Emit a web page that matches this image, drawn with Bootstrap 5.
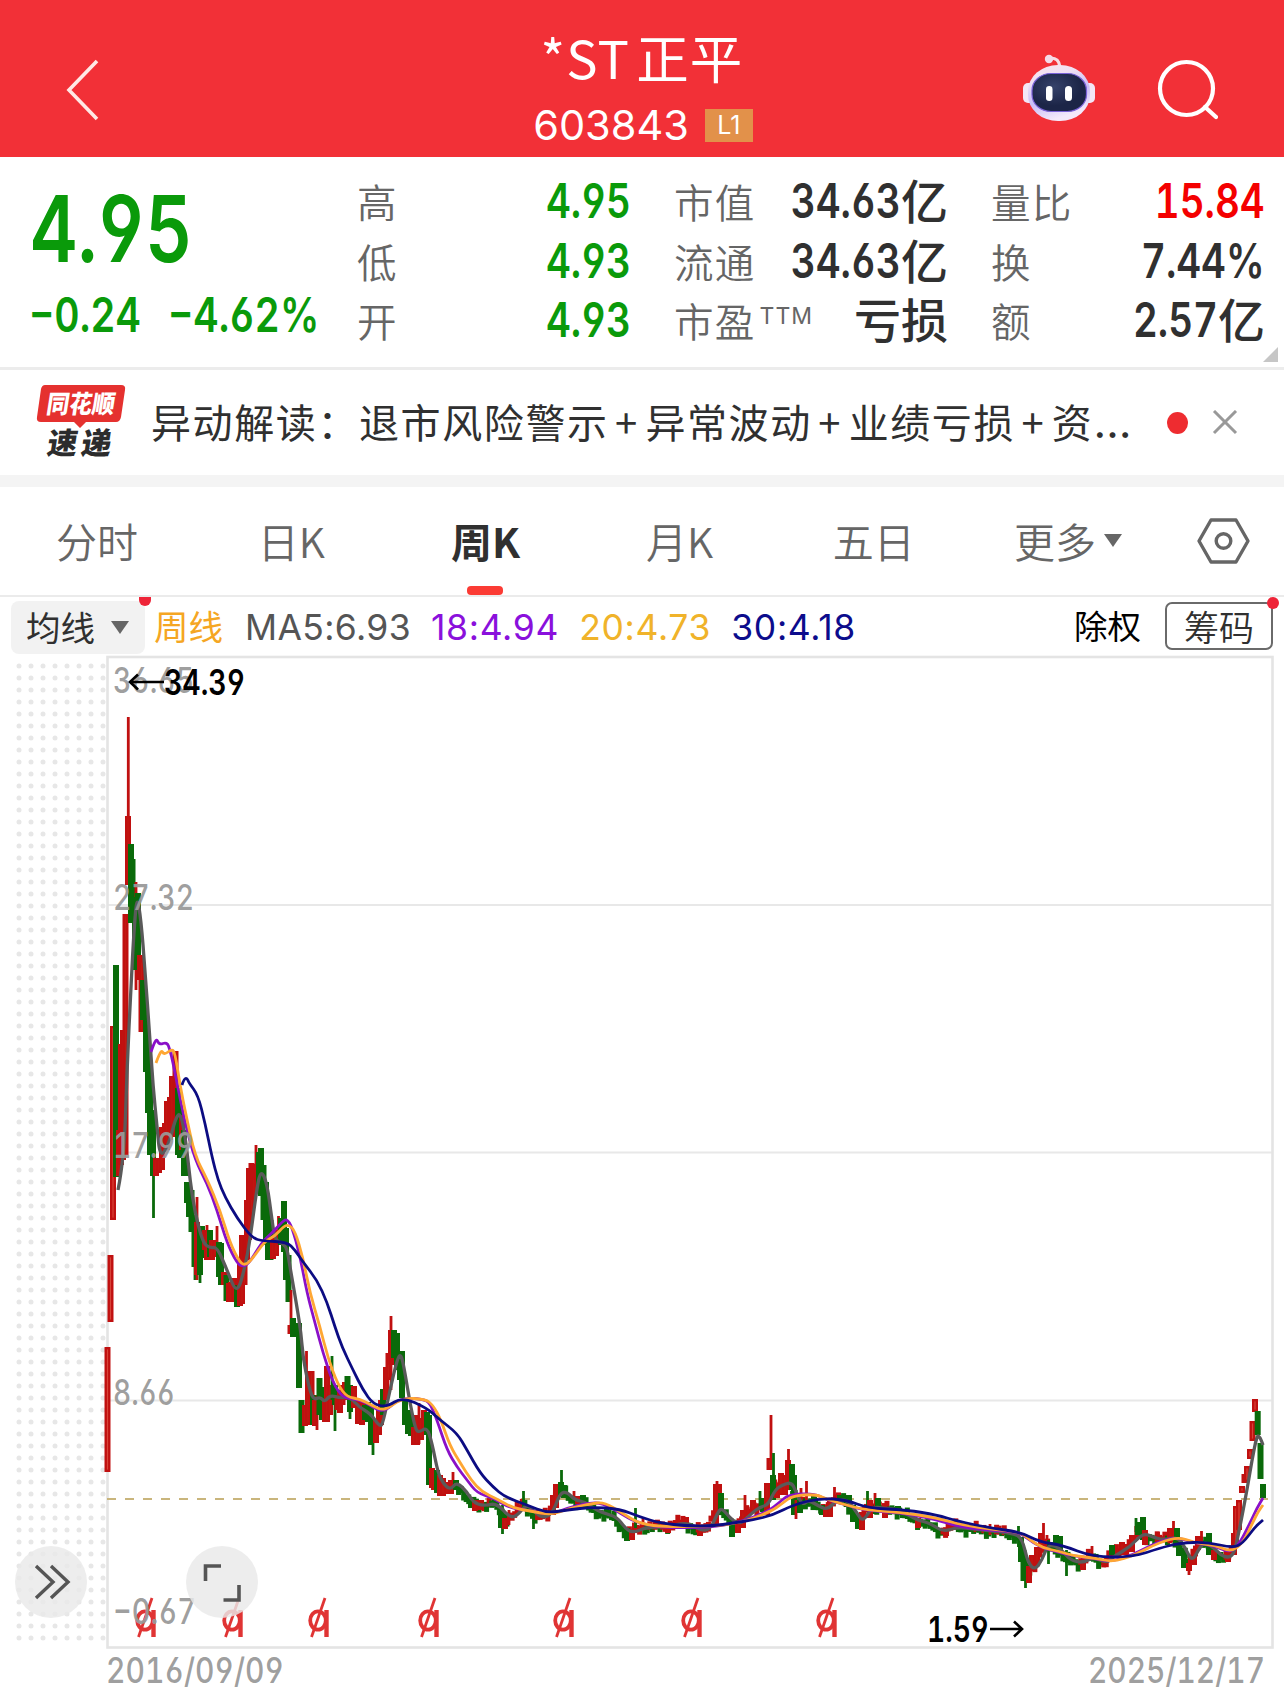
<!DOCTYPE html>
<html lang="zh-CN">
<head>
<meta charset="utf-8">
<meta name="viewport" content="width=device-width, initial-scale=1">
<title>*ST正平 603843</title>
<link href="https://cdn.jsdelivr.net/npm/bootstrap@5.3.0/dist/css/bootstrap.min.css" rel="stylesheet">
<style>
body{width:1284px;height:1692px;overflow:hidden;background:#fff;color:#303030;font-family:"Noto Sans CJK SC",sans-serif;line-height:1}
svg{display:block}
.topbar{height:157px;background:#f23037;color:#fff;padding:0 66px}
.side{width:330px}
.stock-name{font-size:52.5px;line-height:60px;margin-top:26px;letter-spacing:1.2px}
.stock-name span{margin-left:6px}
.stock-code{font-family:Inter,sans-serif;font-size:41.5px;line-height:44px;margin-top:17px;padding-left:2px}
.level{background:#e2914a;font-family:Inter,sans-serif;font-size:25px;width:48px;height:33px;margin-left:16px;line-height:33px;text-align:center}
.din{font-family:Inter,"Noto Sans CJK SC",sans-serif;font-weight:600;font-feature-settings:"cv03","cv04","tnum";display:inline-block;white-space:nowrap;transform:scaleX(.81);transform-origin:right center;font-size:47.5px;line-height:60px}
.din.lft{transform-origin:left center}
.chg-row .din{transform:scaleX(.825);margin-left:-1px}
.fall{color:#0a9a0a}
.rise{color:#f40000}
.quote{height:213px;border-bottom:3px solid #ececec;padding:14px 18px 0 30px}
.price-col{width:327px}
.price{font-size:92px;line-height:92px;margin-top:12px;transform:scaleX(.8)}
.chg-row{margin-top:10px}
.chg{width:139px}
.stat-col{width:274px;margin-right:43px}
.stat-col:last-of-type{margin-right:0}
.stat{height:59.7px}
.stat-label{font-size:39.5px;letter-spacing:1.3px;color:#666;font-weight:350;white-space:nowrap}
.ttm{font-family:Inter,sans-serif;font-size:23px;letter-spacing:1px;margin:0 0 8px 4px;color:#666}
.unit{font-size:47px;font-weight:500;line-height:60px;position:relative;top:-2px}
.corner{right:6px;bottom:5px;width:15px;height:15px;background:#c6c6c6;clip-path:polygon(100% 0,100% 100%,0 100%)}
.news{height:105px;padding-left:36px}
.news-text{font-size:40px;letter-spacing:1.6px;margin-left:24px;width:996px;white-space:nowrap;line-height:60px;padding-bottom:3px}
.news-text i{font-style:normal;margin:0 6.5px}
.news-text b{font-family:Inter,sans-serif;font-weight:400;letter-spacing:0;font-size:44px;line-height:40px}
.dot{width:21px;height:22px;background:#ee2c30;margin-left:20px}
.band{height:12px;background:#f4f4f4}
.tabs{height:110px;border-bottom:2px solid #ebebeb;font-size:41px;color:#666;font-weight:350}
.tab{width:194.2px;height:108px;padding-bottom:1px}
.tab.on{color:#303030;font-weight:700}
.tab.on::after{content:"";position:absolute;left:50%;margin-left:-18px;bottom:0;width:36px;height:9px;border-radius:4px;background:#fb3b34}
.caret{width:0;height:0;border:9px solid transparent;border-top:13px solid #666;border-bottom:0}
.mabar{height:58px;font-size:34.5px}
.lift{position:relative;top:-1px}
.ma-pill{width:134px;height:53px;background:#f2f2f2;border-radius:8px;margin:2px 0 0 11px;padding:0 16px 0 15px}
.ma{font-family:Inter,sans-serif;font-size:35.5px;letter-spacing:.35px;padding-top:3px;margin-left:22px}
.ma.wide{letter-spacing:.7px;margin-left:20px}
.half{left:139px;top:0;width:12px;height:9px;background:#ee2438;border-radius:0 0 6px 6px}
.chip{width:108px;height:48px;border:2px solid #6a6a6a;border-radius:7px;font-weight:350;margin:0 11px 0 24px;font-size:35px}
.chip::after{content:"";position:absolute;right:-8px;top:-7px;width:12px;height:12px;border-radius:50%;background:#ee2438}
.chart{height:1037px}
.fab{width:72px;height:72px;top:891px;border:0;border-radius:50%;background:rgba(233,233,233,.82);padding:0}
</style>
<script src="https://cdn.jsdelivr.net/npm/bootstrap@5.3.0/dist/js/bootstrap.bundle.min.js"></script>
</head>
<body>
<header class="topbar d-flex justify-content-between">
  <div class="side"><svg width="40" height="157"><path d="M31 61 3 90 31 119" fill="none" stroke="#ffe9e6" stroke-width="3.6"/></svg></div>
  <div class="d-flex flex-column align-items-center">
    <div class="stock-name">*ST<span>正平</span></div>
    <div class="stock-code d-flex align-items-center">603843<span class="level">L1</span></div>
  </div>
  <div class="side d-flex justify-content-end">
    <svg width="204" height="157" viewBox="1014 0 204 157">
      <defs><linearGradient id="shell" x2=".35" y2="1"><stop stop-color="#fbe6ea"/><stop offset=".3" stop-color="#efe0f4"/><stop offset=".65" stop-color="#c9bdf7"/><stop offset="1" stop-color="#f4e9fb"/></linearGradient>
      <radialGradient id="face" cx=".4" cy=".35"><stop stop-color="#36426a"/><stop offset="1" stop-color="#1c2547"/></radialGradient></defs>
      <path d="M1049 58q10-1 11 9" fill="none" stroke="#f7dce4" stroke-width="3"/><circle cx="1049" cy="59" r="4.200" fill="#f4dbe8"/>
      <rect x="1023" y="83" width="72" height="20" rx="5" fill="#f3e6f6"/>
      <rect x="1028" y="65" width="62" height="56" rx="30" ry="26" fill="url(#shell)"/>
      <rect x="1032" y="73.500" width="54.500" height="38" rx="19" ry="17" fill="url(#face)" stroke="#7a62d8" stroke-width="1.200"/>
      <rect x="1046" y="86" width="6.500" height="15" rx="3.200" fill="#fff"/><rect x="1065" y="86" width="7" height="15" rx="3.500" fill="#fff"/>
      <circle cx="1186.500" cy="88.500" r="26.500" fill="none" stroke="#fff" stroke-width="4.200"/><path d="m1205 107 11 10" stroke="#fff" stroke-width="4.200" stroke-linecap="round"/>
    </svg>
  </div>
</header>

<section class="quote d-flex position-relative">
  <div class="price-col">
    <div class="din lft price fall">4.95</div>
    <div class="chg-row d-flex fall"><div class="chg"><span class="din lft">−0.24</span></div><span class="din lft">−4.62%</span></div>
  </div>
  <div class="stat-col">
    <div class="stat d-flex justify-content-between align-items-center"><span class="stat-label">高</span><span class="din fall">4.95</span></div>
    <div class="stat d-flex justify-content-between align-items-center"><span class="stat-label">低</span><span class="din fall">4.93</span></div>
    <div class="stat d-flex justify-content-between align-items-center"><span class="stat-label">开</span><span class="din fall">4.93</span></div>
  </div>
  <div class="stat-col">
    <div class="stat d-flex align-items-center"><span class="stat-label me-auto">市值</span><span class="din">34.63</span><span class="unit">亿</span></div>
    <div class="stat d-flex align-items-center"><span class="stat-label me-auto">流通</span><span class="din">34.63</span><span class="unit">亿</span></div>
    <div class="stat d-flex align-items-center"><span class="stat-label">市盈</span><span class="ttm me-auto">TTM</span><span class="unit">亏损</span></div>
  </div>
  <div class="stat-col">
    <div class="stat d-flex justify-content-between align-items-center"><span class="stat-label">量比</span><span class="din rise">15.84</span></div>
    <div class="stat d-flex justify-content-between align-items-center"><span class="stat-label">换</span><span class="din">7.44%</span></div>
    <div class="stat d-flex align-items-center"><span class="stat-label me-auto">额</span><span class="din">2.57</span><span class="unit">亿</span></div>
  </div>
  <span class="corner position-absolute"></span>
</section>

<section class="news d-flex align-items-center">
  <svg width="91" height="80" viewBox="36 383 91 80">
    <path d="M45 385h76q5 0 4 5l-4 27q-1 5-5 5H86l-6 6-6-6H41q-5 0-4-5l4-28q1-4 4-4z" fill="#e5312f"/>
    <g transform="skewX(-9)" font-family="Noto Sans CJK SC,sans-serif" font-weight="900" text-anchor="middle">
      <text x="145" y="413" font-size="25" textLength="68" lengthAdjust="spacingAndGlyphs" fill="#fff">同花顺</text>
      <text x="150" y="454" font-size="30" textLength="64" lengthAdjust="spacing" fill="#2c2c2c">速递</text>
    </g>
  </svg>
  <div class="news-text">异动解读：退市风险警示<i>+</i>异常波动<i>+</i>业绩亏损<i>+</i>资<b>…</b></div>
  <span class="dot rounded-circle"></span>
  <svg class="ms-4" width="26" height="26"><path d="M2 1 24 23M24 1 2 23" stroke="#999" stroke-width="3"/></svg>
</section>
<div class="band"></div>

<nav class="tabs d-flex">
  <div class="tab d-flex align-items-center justify-content-center">分时</div>
  <div class="tab d-flex align-items-center justify-content-center">日K</div>
  <div class="tab on position-relative d-flex align-items-center justify-content-center">周K</div>
  <div class="tab d-flex align-items-center justify-content-center">月K</div>
  <div class="tab d-flex align-items-center justify-content-center">五日</div>
  <div class="tab d-flex align-items-center justify-content-center">更多<span class="caret ms-2"></span></div>
  <svg class="mt-4" style="margin-left:31px" width="54" height="60" viewBox="1197 511 54 60"><path d="M1212 520h25l12 21-12 21h-25l-12-21z" fill="none" stroke="#666" stroke-width="3.4" stroke-linejoin="round"/><circle cx="1224.500" cy="541" r="7.3" fill="none" stroke="#666" stroke-width="3.4"/></svg>
</nav>

<section class="mabar d-flex align-items-center position-relative">
  <div class="ma-pill d-flex align-items-center justify-content-between"><span class="lift">均线</span><span class="caret"></span></div>
  <span class="half position-absolute"></span>
  <span class="lift" style="margin-left:9px;color:#f5a623">周线</span>
  <span class="ma" style="color:#555">MA5:6.93</span>
  <span class="ma wide" style="color:#8a10dc">18:4.94</span>
  <span class="ma wide" style="color:#f0b32a">20:4.73</span>
  <span class="ma wide" style="color:#0c0c8c">30:4.18</span>
  <span class="lift ms-auto text-black" style="font-size:33.5px">除权</span>
  <span class="chip position-relative d-flex align-items-center justify-content-center"><span class="lift">筹码</span></span>
</section>

<section class="chart position-relative">
  <svg id="kline" width="1284" height="1037" viewBox="0 655 1284 1037" font-family="Inter,sans-serif" style="font-feature-settings:'cv03','cv04','tnum'">
    <defs>
      <pattern id="dots" x="13" y="660" width="12" height="12" patternUnits="userSpaceOnUse"><circle cx="6" cy="6" r="2.5" fill="#e7e7e7"/></pattern>
      <g id="exr" fill="none" stroke="#e03434" stroke-width="3.800"><ellipse cx="10" cy="22.500" rx="7.800" ry="9.200"/><path d="M18.500 12v27" stroke-width="4.400"/><path d="M3.500 39 17 0" stroke-width="2.800"/></g>
    </defs>
    <rect x="13" y="660" width="94" height="983" fill="url(#dots)"/>
    <g stroke="#e8e8e8" stroke-width="2"><path d="M107 905H1272M107 1152.500H1272M107 1400.500H1272"/><rect x="107.500" y="657" width="1165" height="990.500" fill="#fff" fill-opacity="0" stroke="#e4e4e4" stroke-width="2.600"/></g>
    <path d="M107 1499H1272" stroke="#c9b57c" stroke-width="2" stroke-dasharray="9 9"/>
    <g id="exrow"></g>
    <g id="candles"></g>
    <g id="lines" fill="none" stroke-width="2.800" stroke-linejoin="round"></g>
    <g font-size="35" font-weight="500" fill="#999" fill-opacity=".95">
      <text x="113" y="692.500" textLength="81" lengthAdjust="spacingAndGlyphs">36.65</text>
      <text x="113" y="910" textLength="81" lengthAdjust="spacingAndGlyphs">27.32</text>
      <text x="113" y="1158" textLength="81" lengthAdjust="spacingAndGlyphs">17.99</text>
      <text x="113" y="1405" textLength="62" lengthAdjust="spacingAndGlyphs">8.66</text>
      <text x="113" y="1624" textLength="83" lengthAdjust="spacingAndGlyphs">−0.67</text>
      <text x="106" y="1683" textLength="178" lengthAdjust="spacingAndGlyphs">2016/09/09</text>
      <text x="1088" y="1683" textLength="177" lengthAdjust="spacingAndGlyphs">2025/12/17</text>
    </g>
    <g font-size="35" font-weight="600" fill="#000">
      <text x="164" y="695" textLength="81" lengthAdjust="spacingAndGlyphs">34.39</text>
      <text x="927" y="1642" textLength="62" lengthAdjust="spacingAndGlyphs">1.59</text>
    </g>
    <path d="M164 682H130M138 674.500 130 682 138 689.500M990 1629H1022M1014 1621.500 1022 1629 1014 1636.500" fill="none" stroke="#000" stroke-width="2.600"/>
  </svg>
  <button class="fab position-absolute" style="left:15px" aria-label="展开"><svg width="72" height="72"><path d="M21 20 38 36 21 52M36 20 53 36 36 52" fill="none" stroke="#555" stroke-width="3.400"/></svg></button>
  <button class="fab position-absolute" style="left:186px" aria-label="全屏"><svg width="72" height="72"><path d="M19.500 35V20H35M53 39V54H37.500" fill="none" stroke="#555" stroke-width="3.600"/></svg></button>
</section>

<script>
const NS='http://www.w3.org/2000/svg';
const RED='#c01010', GREEN='#0a6a0a';
const candles=document.getElementById('candles'), lines=document.getElementById('lines');
function rect(x,y,w,h,fill,stroke){const e=document.createElementNS(NS,'rect');e.setAttribute('x',x);e.setAttribute('y',y);e.setAttribute('width',w);e.setAttribute('height',h);e.setAttribute('fill',fill);if(stroke){e.setAttribute('stroke',stroke);e.setAttribute('stroke-width',2.4)}candles.appendChild(e)}
// moving averages as x,y points
const ma5='118,1190 124,1160 127,1070 131,985 134,930 137,895 141,920 145,970 150,1040 153,1085 157,1127 160,1157 168,1147 177,1113 182,1117 187,1150 190,1180 195,1213 203,1243 210,1248 217,1247 227,1270 237,1295 245,1267 250,1240 257,1187 261,1170 267,1183 272,1220 275,1240 282,1243 287,1248 290,1267 297,1307 301,1333 303,1357 308,1383 313,1400 320,1397 325,1402 330,1395 340,1398 350,1397 360,1408 370,1413 380,1427 383,1423 390,1390 397,1360 401,1353 405,1373 410,1403 415,1427 418,1433 427,1427 432,1443 438,1473 443,1483 450,1490 457,1482 467,1492 473,1502 483,1506 497,1503 510,1518 518,1515 527,1503 540,1518 552,1515 560,1493 567,1492 575,1500 585,1502 593,1508 603,1513 617,1517 625,1528 633,1533 647,1527 667,1527 687,1522 700,1530 710,1530 718,1512 722,1508 730,1518 737,1523 743,1522 752,1513 760,1507 768,1505 775,1490 782,1485 792,1482 797,1495 803,1505 808,1500 817,1505 827,1510 837,1500 848,1500 857,1513 863,1522 872,1507 883,1508 900,1510 917,1520 930,1523 943,1532 957,1527 983,1530 1013,1533 1022,1538 1028,1563 1035,1570 1042,1560 1047,1547 1053,1545 1062,1550 1070,1560 1083,1563 1093,1557 1107,1563 1113,1557 1130,1547 1143,1533 1153,1537 1163,1540 1177,1537 1185,1547 1192,1562 1200,1547 1205,1542 1213,1547 1223,1557 1233,1557 1238,1537 1247,1490 1252,1460 1257,1435 1260,1437 1263,1445';
const ma18='151,1052 156,1037 159,1045 167,1042 170,1050 173,1063 177,1083 185,1123 195,1160 207,1183 217,1210 227,1243 237,1263 243,1267 250,1262 262,1242 272,1233 283,1221 287,1219 292,1227 300,1256 307,1293 315,1323 323,1353 333,1383 343,1398 357,1399 370,1405 383,1413 400,1398 423,1399 430,1403 437,1420 447,1450 457,1467 467,1480 477,1493 493,1498 510,1508 527,1510 550,1515 567,1508 587,1503 603,1503 620,1513 637,1523 667,1528 710,1527 737,1523 767,1512 780,1502 788,1495 813,1493 827,1500 843,1504 863,1510 900,1513 913,1515 937,1520 960,1527 990,1530 1018,1532 1027,1538 1040,1547 1057,1552 1073,1556 1093,1558 1110,1562 1133,1555 1157,1542 1178,1537 1193,1543 1213,1545 1230,1553 1240,1543 1250,1523 1257,1508 1263,1498';
const ma20='156,1063 161,1049 164,1055 172,1049 175,1053 180,1085 186,1115 195,1156 207,1179 220,1210 230,1243 240,1263 246,1265 253,1258 265,1241 275,1236 284,1226 289,1225 295,1231 303,1258 310,1293 320,1327 328,1358 338,1385 347,1397 360,1399 373,1406 384,1411 402,1398 425,1399 433,1405 441,1420 450,1446 461,1464 471,1480 482,1492 497,1499 513,1508 530,1511 552,1515 570,1508 590,1504 604,1502 622,1513 640,1524 667,1527 712,1526 740,1523 770,1512 783,1503 792,1496 815,1494 829,1500 846,1505 866,1510 900,1512 937,1518 962,1525 992,1529 1020,1532 1030,1540 1043,1548 1058,1551 1074,1556 1095,1558 1113,1562 1135,1555 1160,1542 1180,1537 1195,1543 1215,1545 1231,1552 1243,1543 1253,1522 1258,1512 1263,1505';
const ma30='182,1085 184,1079 187,1078 189,1083 198,1095 205,1123 212,1157 218,1180 225,1197 237,1218 252,1238 263,1241 287,1242 295,1250 303,1262 317,1280 327,1302 335,1327 342,1347 353,1370 363,1390 373,1404 387,1407 402,1397 427,1408 440,1420 457,1433 467,1450 480,1473 493,1487 505,1497 527,1505 547,1513 567,1510 593,1507 620,1509 640,1517 660,1523 687,1526 713,1526 733,1523 753,1520 773,1515 793,1505 820,1498 847,1500 867,1508 907,1510 937,1515 957,1521 990,1528 1020,1532 1040,1542 1062,1545 1093,1557 1133,1557 1160,1548 1180,1543 1207,1542 1233,1548 1243,1543 1255,1527 1263,1520';
const pts=s=>s.split(' ').map(p=>p.split(',').map(Number));
const p5=pts(ma5);
function at(x){for(let i=1;i<p5.length;i++)if(p5[i][0]>=x){const a=p5[i-1],b=p5[i];return a[1]+(b[1]-a[1])*(x-a[0])/(b[0]-a[0])}return 1445}
// quiet weeks: small bodies that lead the five-week average
for(let x=456,i=0;x<1232;x+=2.55,i++){
  const y=at(x+4),d=at(x+7)-at(x),n=Math.sin(i*2.3)*2+Math.sin(i*.7)*1.5;
  const up=d+n*.7<0,h=6+Math.abs(n)*1.6;
  if(up)rect(x-2.5,y-h/2+n,5,h,RED);else rect(x-2.5,y-h/2+n,5,h,GREEN);
}
// colour, centre x, body top, body bottom; lower case w marks a wick
const data=`R107.5,1347,1472 R110.5,1255,1322 R113,1026,1220 G116,965,1177 R119,1130,1176 R121,1044,1165 R123,1030,1160 R125.5,914,1155 Rw128.3,717,816 R128,816,885 G131,844,923 G132.500,859,921 Rw136,882,990 G135,897,970 G138,893,970 R140,955,980 R141.500,960,1032 G143,980,1020 G146,1005,1072 G148,1040,1113 G150,1070,1155 Gw153.500,1155,1218 G153,1110,1176 R156,1158,1176 R159,1158,1173 R162,1127,1170 R165,1123,1150 R167,1101,1150 R170,1097,1140 R172,1076,1137 R175.500,1051,1125 G178,1088,1155 G180,1110,1158 R182,1115,1150 G184,1130,1176 G186,1160,1176 G187,1182,1203 G189,1182,1217 G191.500,1190,1232 G194.500,1215,1267 Gw195,1267,1280 R197,1222,1275 Rw197,1197,1280 G200,1226,1275 Gw200,1275,1283 G202,1226,1258 R205,1230,1250 Rw207,1225,1240 R207,1230,1260 G210,1230,1257 R212,1240,1260 R215,1240,1257 Rw217,1226,1250 G219,1242,1277 G221,1243,1285 R224,1272,1285 G226.500,1275,1301 R229,1283,1302 R231,1282,1302 R234,1278,1300 G237,1285,1307 R240,1257,1306 R242,1235,1304 R244.500,1236,1285 R247,1200,1260 R249,1168,1240 R251.500,1163,1215 R254,1164,1200 R256,1165,1180 Rw256,1145,1190 G259,1152,1185 G261,1148,1196 G263.500,1165,1220 G266,1182,1245 G268,1210,1260 G270.500,1220,1260 R273,1238,1259 R276,1230,1256 Rw278.500,1216,1245 G281,1218,1245 G284,1201,1252 G286,1228,1280 G288.500,1255,1302 Rw291,1290,1330 R290.500,1325,1334 G293,1318,1337 G299,1323,1388 G301.500,1400,1433 Rw306.500,1351,1425 R305,1405,1426 R308,1371,1425 R311.500,1371,1410 G313,1395,1425 R315,1400,1426 Rw317,1395,1430 G319.500,1378,1415 G322,1387,1420 R325,1400,1422 R327,1366,1422 R330,1385,1415 Gw332,1356,1400 Gw335,1385,1431 G335,1385,1405 R337.500,1395,1410 R340,1390,1413 R342.500,1385,1405 R345,1382,1400 G347.500,1376,1398 G350,1385,1412 Gw350,1400,1419 R354,1386,1408 R358,1400,1424 R362,1402,1425 G365,1405,1420 G368,1402,1422 G371,1407,1445 Gw373,1440,1455 R376,1420,1443 R379,1410,1435 R381,1400,1425 G383,1389,1415 R386,1367,1400 R388.500,1353,1380 R391,1330,1365 Rw391,1316,1390 G394,1330,1358 G397,1333,1370 G400,1351,1380 G402,1351,1398 G405,1400,1425 G408,1410,1434 G411,1415,1436 R414,1427,1445 R417,1415,1445 Rw419,1403,1444 R421,1418,1440 R424,1410,1430 G427,1412,1435 G429,1415,1485 R432,1468,1488 R434,1470,1490 G437,1470,1493 R440,1475,1496 R443,1478,1496 R447,1482,1494 R451,1480,1494 Rw453,1472,1490 G456,1480,1490 G471,1498,1508 R475,1500,1511 R481,1500,1510 Gw502.500,1505,1534 G501,1515,1528 R505,1518,1529 Rw509,1510,1525 Gw523.500,1491,1508 Gw533.500,1510,1529 R553,1495,1515 R556,1484,1508 Gw561.500,1470,1492 G561,1482,1495 G564,1485,1498 Rw574,1491,1500 R578,1496,1504 G583,1495,1505 G627,1528,1541 Gw635.500,1508,1528 R632,1532,1540 Rw643,1518,1530 R668,1527,1533 R686,1517,1523 R700,1528,1536 Rw717,1481,1495 R716,1484,1525 R719,1484,1500 G721,1493,1515 G732,1520,1537 R738,1522,1533 R743,1510,1528 Rw745,1495,1515 R753,1500,1512 Gw760,1491,1510 G763,1498,1512 R767,1483,1515 R769.500,1458,1470 Rw771,1415,1458 Gw773.500,1453,1500 G773,1475,1500 R777,1490,1498 R781,1473,1495 R785,1475,1495 R788,1460,1490 Rw788.500,1449,1490 G792,1464,1490 G794,1475,1515 Rw796,1500,1519 G800,1500,1513 Rw801,1488,1500 Rw806.500,1481,1500 G814,1495,1510 G822,1505,1515 R826,1508,1517 R830,1500,1517 Rw834.500,1487,1500 G840,1495,1503 G849,1495,1502 G853,1505,1522 G858,1515,1529 R862,1512,1530 Gw867.500,1491,1510 R870,1500,1518 Rw875,1493,1508 G878,1498,1508 R885,1508,1518 G898,1506,1513 R918,1518,1528 R946,1531,1536 Rw990,1524,1535 Gw1018.500,1526,1540 G1021,1537,1562 G1023.500,1550,1581 Gw1025.500,1565,1588 R1029,1566,1583 R1032,1555,1570 R1037,1547,1563 R1041,1533,1550 Rw1043.500,1523,1545 Rw1047,1535,1550 Gw1048.500,1540,1564 G1056,1535,1545 G1060,1536,1554 Gw1066.500,1550,1576 G1068,1555,1563 R1083,1560,1570 Rw1092,1546,1558 G1112,1545,1555 R1122,1542,1555 R1132,1535,1552 Gw1136,1518,1532 G1138,1522,1535 G1143,1517,1540 R1145,1530,1545 Rw1158.500,1532,1543 R1170,1528,1542 Rw1173.500,1521,1540 G1177,1528,1540 G1179,1540,1556 G1184,1550,1568 R1189,1563,1571 Rw1189,1570,1575 R1194,1550,1565 R1198,1536,1550 Rw1201.500,1531,1545 G1209,1533,1555 R1214,1550,1560 R1228,1553,1562 R1234,1533,1555 R1236,1506,1545 R1239,1500,1530 R1242,1486,1493 R1244.500,1474,1483 R1247,1466,1482 R1250,1449,1459 R1252.500,1421,1441 R1255,1399,1412 G1257.700,1411,1435 G1260.500,1443,1479 G1263,1484,1498`;
data.split(' ').forEach(s=>{
  const c=s[0],w=s[1]==='w',[x,a,b]=s.slice(w?2:1).split(',').map(Number);
  if(w)rect(x-1.4,a,2.8,b-a,c==='R'?RED:GREEN);
  else if(c==='R')rect(x-1.8,a+1.2,3.6,Math.max(b-a-2.4,1),x<118||x>1234?'#d84438':'#c01a12',RED);
  else rect(x-3,a,6,b-a,GREEN);
});
[[ma5,'#5a5a5a',3.3],[ma18,'#8a10c8',2.8],[ma20,'#ffa733',2.8],[ma30,'#0c0c82',2.8]].forEach(([s,c,w])=>{
  const p=pts(s);let d='M'+p[0];
  for(let i=1;i<p.length-1;i++)d+='Q'+p[i]+' '+[(p[i][0]+p[i+1][0])/2,(p[i][1]+p[i+1][1])/2];
  d+='L'+p[p.length-1];
  const e=document.createElementNS(NS,'path');e.setAttribute('d',d);e.setAttribute('stroke',c);e.setAttribute('stroke-width',w);lines.appendChild(e);
});
// ex-rights marks
[135,222,308,418,553,681,816].forEach(x=>{const u=document.createElementNS(NS,'use');u.setAttribute('href','#exr');u.setAttribute('x',x);u.setAttribute('y',1598);document.getElementById('exrow').appendChild(u)});
</script>
</body>
</html>
